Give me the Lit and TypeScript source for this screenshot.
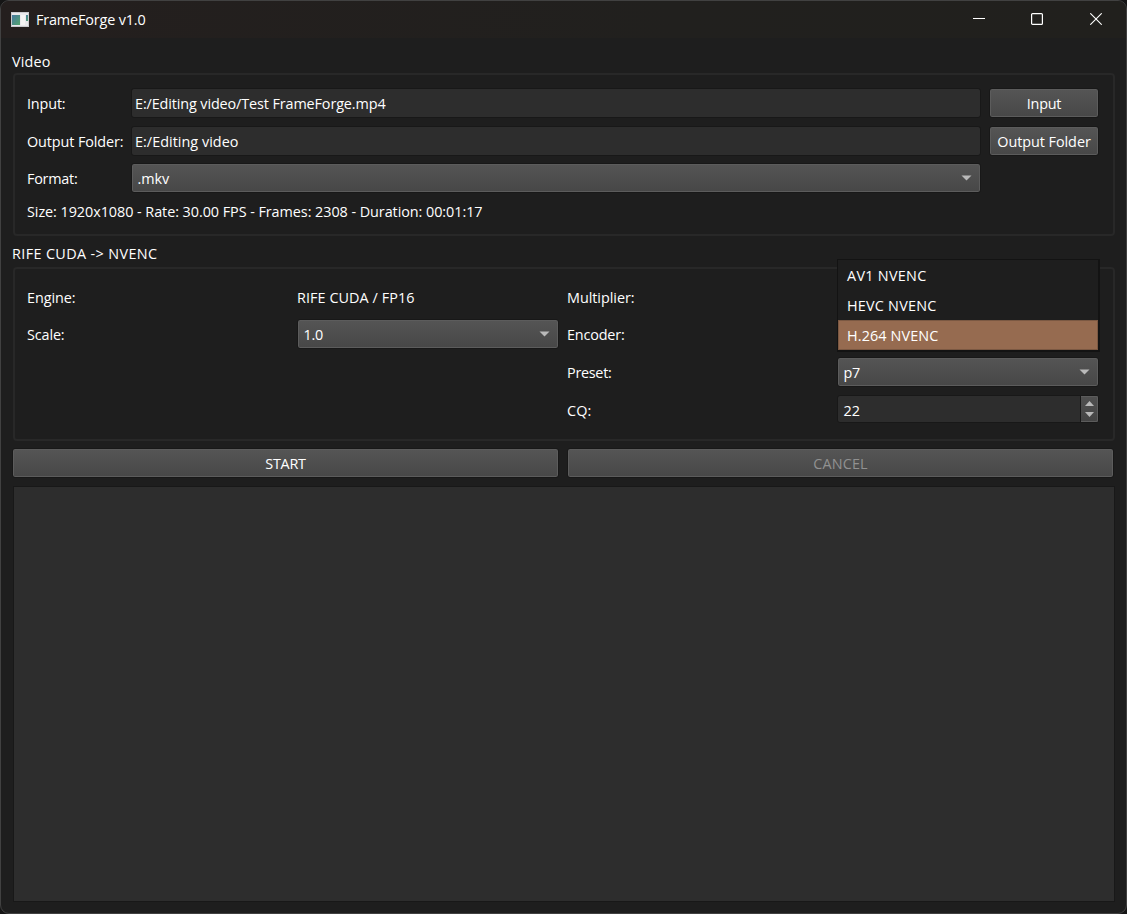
import { LitElement, html, css, svg } from "lit";
import { customElement, property } from "lit/decorators.js";
import { classMap } from "lit/directives/class-map.js";

/** A text run that keeps a fixed width by adjusting its letter spacing. */
@customElement("ui-text")
class UiText extends LitElement {
  @property() text = "";
  @property({ type: Number }) width = 0;

  static styles = css`
    :host {
      display: block;
      height: 20px;
      line-height: 20px;
      white-space: pre;
    }
    span {
      display: inline-block;
    }
  `;

  updated() {
    const span = this.renderRoot.querySelector("span") as HTMLElement;
    const natural = span.getBoundingClientRect().width;
    if (this.width && natural) {
      span.style.letterSpacing = `${(this.width - 0.5 - natural) / this.text.length}px`;
    }
  }

  render() {
    return html`<span>${this.text}</span>`;
  }
}

const t = (text: string, width: number) => html`<ui-text .text=${text} .width=${width}></ui-text>`;

const arrow = html`<svg class="arrow" width="11" height="6" viewBox="0 0 11 6">
  ${svg`<path d="M0.5 0.5H10.5L5.5 5.5Z" fill="#b9b9b9"></path>`}
</svg>`;

@customElement("app-root")
class AppRoot extends LitElement {
  static styles = css`
    :host {
      display: block;
      width: 1127px;
      height: 914px;
      background: #151515;
      color: #fff;
      font: 14.4px/20px "Open Sans", "Noto Sans", sans-serif;
      overflow: hidden;
    }
    * {
      box-sizing: border-box;
    }
    .window {
      height: 914px;
      border: 1px solid #414141;
      border-radius: 9px;
      background: #1e1e1e;
      overflow: hidden;
    }
    .titlebar {
      height: 37px;
      display: flex;
      align-items: center;
      padding: 0 24px 0 10px;
      background: linear-gradient(90deg, #241f1e, #21201e 60%, #21201d);
    }
    .title {
      margin-left: 7px;
      flex: 1;
    }
    .controls {
      display: flex;
      gap: 46px;
      margin-top: -1px;
    }
    .close {
      margin-left: 1px;
    }
    svg {
      display: block;
    }
    .body {
      padding: 14px 11px 0 11px;
    }
    .group {
      margin-left: 1px;
      border: 2px solid #282828;
      border-radius: 4px;
    }
    .video {
      height: 163px;
      margin-top: 1px;
      padding: 14px 14px 0 12px;
      display: grid;
      grid-template-columns: 96px 850px 110px;
      grid-template-rows: 30px 30px 30px 20px;
      column-gap: 8px;
      row-gap: 8px;
      align-items: center;
    }
    .video .format {
      margin-top: -2px;
    }
    .video .info {
      grid-column: 1 / 4;
      margin-top: -2px;
    }
    .box {
      height: 30px;
      border: 1px solid #181818;
      border-radius: 3px;
      display: flex;
      align-items: center;
    }
    .group .box {
      margin-top: -2px;
    }
    .group .box.format {
      margin-top: -4px;
    }
    .box ui-text {
      margin-top: 2px;
    }
    .field {
      background: #2d2d2d;
      padding-left: 3px;
    }
    .raised {
      background: linear-gradient(#555, #474747);
      box-shadow: inset 0 0 0 1px #5c5c5c;
    }
    .button {
      justify-content: center;
    }
    .combo {
      justify-content: space-between;
      padding: 0 8px 0 5.5px;
    }
    .arrow {
      margin-top: -1px;
    }
    .group-label {
      margin-top: 8px;
    }
    .encode {
      position: relative;
      height: 174px;
      margin-top: 3px;
      padding: 11px 14px 0 12px;
      display: grid;
      grid-template-columns: 262px 262px 262px 262px;
      grid-template-rows: 36px 38px 38px 38px;
      column-gap: 8px;
      align-items: center;
    }
    .group .box.spin {
      height: 28px;
      margin-top: -4px;
      padding-left: 5.5px;
      justify-content: space-between;
    }
    .spin ui-text {
      margin-top: 4px;
    }
    .spin-buttons {
      width: 18px;
      height: 26px;
      border-left: 1px solid #181818;
      border-radius: 0 2px 2px 0;
      background: linear-gradient(#505050, #444);
      box-shadow: inset -1px 0 #5c5c5c, inset 0 1px #5c5c5c, inset 0 -1px #5c5c5c;
      display: flex;
      flex-direction: column;
      align-items: center;
      justify-content: center;
      gap: 6px;
    }
    .popup {
      position: absolute;
      left: 822px;
      top: -10px;
      width: 263px;
      height: 93px;
      border: solid #131313;
      border-width: 1px 2px 2px 1px;
      background: #1e1e1e;
    }
    .option {
      height: 30px;
      padding: 6px 0 0 9px;
    }
    .option.selected {
      padding: 5px 0 0 8px;
      border: 1px solid #7b5842;
      background: #966b50;
    }
    .actions {
      display: grid;
      grid-template-columns: 547px 547px;
      column-gap: 8px;
      margin-top: 7px;
    }
    .disabled {
      color: #919191;
    }
    .log {
      height: 416px;
      margin: 8px 0 0 1px;
      background: #2d2d2d;
      border: 1px solid #181818;
    }
  `;

  private field(text: string, width: number) {
    return html`<div class="box field">${t(text, width)}</div>`;
  }

  private button(text: string, width: number, disabled = false) {
    return html`<div class=${classMap({ box: true, raised: true, button: true, disabled })}>${t(text, width)}</div>`;
  }

  private combo(text: string, width: number, extra = "") {
    return html`<div class="box raised combo ${extra}">${t(text, width)}${arrow}</div>`;
  }

  render() {
    return html`
      <div class="window">
        <div class="titlebar">
          <svg width="18" height="15" viewBox="0 0 18 15">
            <defs>
              <linearGradient id="screen" x1="0" y1="0" x2="1" y2="1">
                <stop offset="0" stop-color="#4879a0" />
                <stop offset="1" stop-color="#52a46d" />
              </linearGradient>
            </defs>
            <rect width="18" height="15" fill="#e9e9ec" />
            <rect x="0.5" y="0.5" width="17" height="14" fill="none" stroke="#c9cace" />
            <rect x="1" y="3" width="8" height="10" fill="url(#screen)" />
            <rect x="10" y="3" width="4" height="10" fill="#f4f4f4" />
            <rect x="15" y="3" width="2" height="6" fill="url(#screen)" />
          </svg>
          <div class="title">${t("FrameForge v1.0", 110)}</div>
          <div class="controls">
            <svg width="12" height="12" viewBox="0 0 12 12"><path d="M0 5.5H12" stroke="#fff" /></svg>
            <svg width="12" height="12" viewBox="0 0 12 12">
              <rect x="0.6" y="0.6" width="10.8" height="10.8" rx="1" fill="none" stroke="#fff" stroke-width="1.2" />
            </svg>
            <svg class="close" width="12" height="12" viewBox="0 0 12 12">
              <path d="M0.3 0.3L11.7 11.7M11.7 0.3L0.3 11.7" stroke="#fff" stroke-width="1.1" />
            </svg>
          </div>
        </div>
        <div class="body">
          ${t("Video", 39)}
          <div class="group video">
            ${t("Input:", 39)} ${this.field("E:/Editing video/Test FrameForge.mp4", 251)} ${this.button("Input", 35)}
            ${t("Output Folder:", 97)} ${this.field("E:/Editing video", 104)}
            ${this.button("Output Folder", 94)}
            <div class="format">${t("Format:", 51)}</div>
            ${this.combo(".mkv", 32, "format")}
            <div></div>
            <div class="info">${t("Size: 1920x1080 - Rate: 30.00 FPS - Frames: 2308 - Duration: 00:01:17", 456)}</div>
          </div>
          <div class="group-label">${t("RIFE CUDA -> NVENC", 146)}</div>
          <div class="group encode">
            ${t("Engine:", 49)} ${t("RIFE CUDA / FP16", 118)} ${t("Multiplier:", 68)}
            <div></div>
            ${t("Scale:", 38)} ${this.combo("1.0", 20)} ${t("Encoder:", 58)}
            <div></div>
            <div></div>
            <div></div>
            ${t("Preset:", 45)} ${this.combo("p7", 17)}
            <div></div>
            <div></div>
            ${t("CQ:", 25)}
            <div class="box field spin">
              ${t("22", 17)}
              <div class="spin-buttons">
                <svg width="9" height="5" viewBox="0 0 9 5"><path d="M0 5H9L4.5 0Z" fill="#b9b9b9" /></svg>
                <svg width="9" height="5" viewBox="0 0 9 5"><path d="M0 0H9L4.5 5Z" fill="#b9b9b9" /></svg>
              </div>
            </div>
            <div class="popup">
              <div class="option">${t("AV1 NVENC", 80)}</div>
              <div class="option">${t("HEVC NVENC", 90)}</div>
              <div class="option selected">${t("H.264 NVENC", 92)}</div>
            </div>
          </div>
          <div class="actions">${this.button("START", 41)} ${this.button("CANCEL", 55, true)}</div>
          <div class="log"></div>
        </div>
      </div>
    `;
  }
}
